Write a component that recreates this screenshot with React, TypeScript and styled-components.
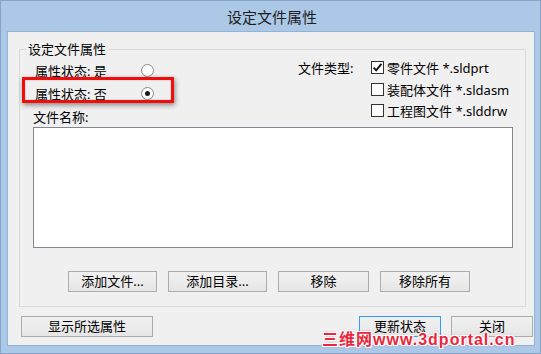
import React from "react";
import styled, { createGlobalStyle } from "styled-components";

const Global = createGlobalStyle`
  html, body { margin: 0; padding: 0; background: #ffffff; }
  body { font-family: "Noto Sans", "Noto Sans CJK SC", sans-serif; color: #000; }
  * { box-sizing: border-box; }
`;

const Window = styled.div`
  position: relative;
  width: 541px;
  height: 354px;
  border: 1px solid #86a4c8;
  background: #abc8e7;
  padding: 0 5px 7px 6px;
  display: flex;
  flex-direction: column;
`;

const TitleBar = styled.div`
  height: 30px;
  display: flex;
  align-items: center;
  justify-content: center;
  font-size: 15px;
  color: #1e1e1e;
  padding-left: 2px;
`;

const Client = styled.div`
  flex: 1;
  border: 1px solid #93b2d7;
  background: #f0f0f0;
  padding-top: 10px;
  display: flex;
  flex-direction: column;
`;

const Group = styled.fieldset`
  margin: 0 8px 0 11px;
  padding: 0 12px 14px 13px;
  border: 1px solid #d9d9d9;
  min-width: 0;
`;

const Legend = styled.legend`
  margin-left: -7px;
  padding: 0 2px;
  height: 15px;
  font-size: 13px;
  line-height: 15px;
`;

const TopSection = styled.div`
  display: flex;
  height: 70px;
`;

const LeftCol = styled.div`
  width: 265px;
  display: flex;
  flex-direction: column;
  padding-top: 2px;
`;

const RadioRow = styled.div`
  position: relative;
  display: flex;
  align-items: center;
  height: 23px;
  padding-left: 2px;
  font-size: 13px;
`;

const RowLabel = styled.span`
  width: 106px;
  white-space: nowrap;
`;

const RadioCircle = styled.span<{ $checked?: boolean }>`
  width: 13px;
  height: 13px;
  border-radius: 50%;
  border: 1px solid #8c8c8c;
  background: radial-gradient(circle at 50% 40%, #ffffff 55%, #ececec 100%);
  display: flex;
  align-items: center;
  justify-content: center;
  &::after {
    content: "";
    display: ${(p) => (p.$checked ? "block" : "none")};
    width: 5px;
    height: 5px;
    border-radius: 50%;
    background: #1b1b1b;
  }
`;

const Highlight = styled.div`
  position: absolute;
  left: -11px;
  top: -5px;
  width: 152px;
  height: 26px;
  border: 3px solid #f20d0d;
  box-shadow: 1px 2px 5px rgba(0, 0, 0, 0.45), inset 0 0 2px rgba(0, 0, 0, 0.25);
  pointer-events: none;
`;

const FieldLabel = styled.div`
  height: 22px;
  display: flex;
  align-items: center;
  font-size: 13px;
`;

const RightCol = styled.div`
  display: flex;
  font-size: 13px;
`;

const TypeLabel = styled.div`
  width: 73px;
  height: 21.5px;
  display: flex;
  align-items: center;
  white-space: nowrap;
`;

const CheckList = styled.div`
  display: flex;
  flex-direction: column;
`;

const CheckRow = styled.div`
  height: 21.5px;
  display: flex;
  align-items: center;
  gap: 3px;
  white-space: nowrap;
`;

const CheckBox = styled.span`
  width: 13px;
  height: 13px;
  border: 1px solid #333333;
  background: #ffffff;
  display: flex;
  align-items: center;
  justify-content: center;
`;

const FileList = styled.div`
  width: 480px;
  height: 121px;
  border: 1px solid #828790;
  background: #ffffff;
`;

const ButtonRow = styled.div`
  display: flex;
  gap: 11px;
  margin-top: 23px;
  padding-left: 35px;
`;

const Button = styled.button<{ $w: number; $default?: boolean }>`
  width: ${(p) => p.$w}px;
  height: 21px;
  padding: 0;
  border: 1px solid ${(p) => (p.$default ? "#3399ff" : "#acacac")};
  background: linear-gradient(to bottom, #f0f0f0 0%, #ececec 50%, #e5e5e5 100%);
  font-family: "Noto Sans", "Noto Sans CJK SC", sans-serif;
  font-size: 13px;
  line-height: 19px;
  color: #000;
  white-space: nowrap;
`;

const BottomBar = styled.div`
  display: flex;
  justify-content: space-between;
  margin-top: 9px;
  padding: 0 1px 0 13px;
`;

const RightButtons = styled.div`
  display: flex;
  gap: 10px;
`;

const Watermark = styled.div`
  position: absolute;
  left: 321px;
  top: 331px;
  font-family: "Liberation Sans", "Noto Sans CJK SC", sans-serif;
  font-weight: 700;
  font-size: 16px;
  line-height: 16px;
  letter-spacing: 1px;
  color: #e8283d;
  white-space: nowrap;
  text-shadow:
    1px 0 0 #fff, -1px 0 0 #fff, 0 1px 0 #fff, 0 -1px 0 #fff,
    1px 1px 0 #fff, -1px -1px 0 #fff, 1px -1px 0 #fff, -1px 1px 0 #fff,
    0 0 3px #f5748a;
`;

const Check = () => (
  <svg width="11" height="11" viewBox="0 0 11 11">
    <path d="M1.6 5.6 L4.2 8.4 L9.4 1.8" fill="none" stroke="#111" strokeWidth="1.9" />
  </svg>
);

export default function App() {
  return (
    <>
      <Global />
      <Window>
        <TitleBar>设定文件属性</TitleBar>
        <Client>
          <Group>
            <Legend>设定文件属性</Legend>
            <TopSection>
              <LeftCol>
                <RadioRow>
                  <RowLabel>属性状态: 是</RowLabel>
                  <RadioCircle />
                </RadioRow>
                <RadioRow>
                  <Highlight />
                  <RowLabel>属性状态: 否</RowLabel>
                  <RadioCircle $checked />
                </RadioRow>
                <FieldLabel>文件名称:</FieldLabel>
              </LeftCol>
              <RightCol>
                <TypeLabel>文件类型:</TypeLabel>
                <CheckList>
                  <CheckRow>
                    <CheckBox>
                      <Check />
                    </CheckBox>
                    零件文件 *.sldprt
                  </CheckRow>
                  <CheckRow>
                    <CheckBox />
                    装配体文件 *.sldasm
                  </CheckRow>
                  <CheckRow>
                    <CheckBox />
                    工程图文件 *.slddrw
                  </CheckRow>
                </CheckList>
              </RightCol>
            </TopSection>
            <FileList />
            <ButtonRow>
              <Button $w={89}>添加文件...</Button>
              <Button $w={99}>添加目录...</Button>
              <Button $w={91}>移除</Button>
              <Button $w={90}>移除所有</Button>
            </ButtonRow>
          </Group>
          <BottomBar>
            <Button $w={132}>显示所选属性</Button>
            <RightButtons>
              <Button $w={82} $default>
                更新状态
              </Button>
              <Button $w={82}>关闭</Button>
            </RightButtons>
          </BottomBar>
        </Client>
        <Watermark>三维网www.3dportal.cn</Watermark>
      </Window>
    </>
  );
}
